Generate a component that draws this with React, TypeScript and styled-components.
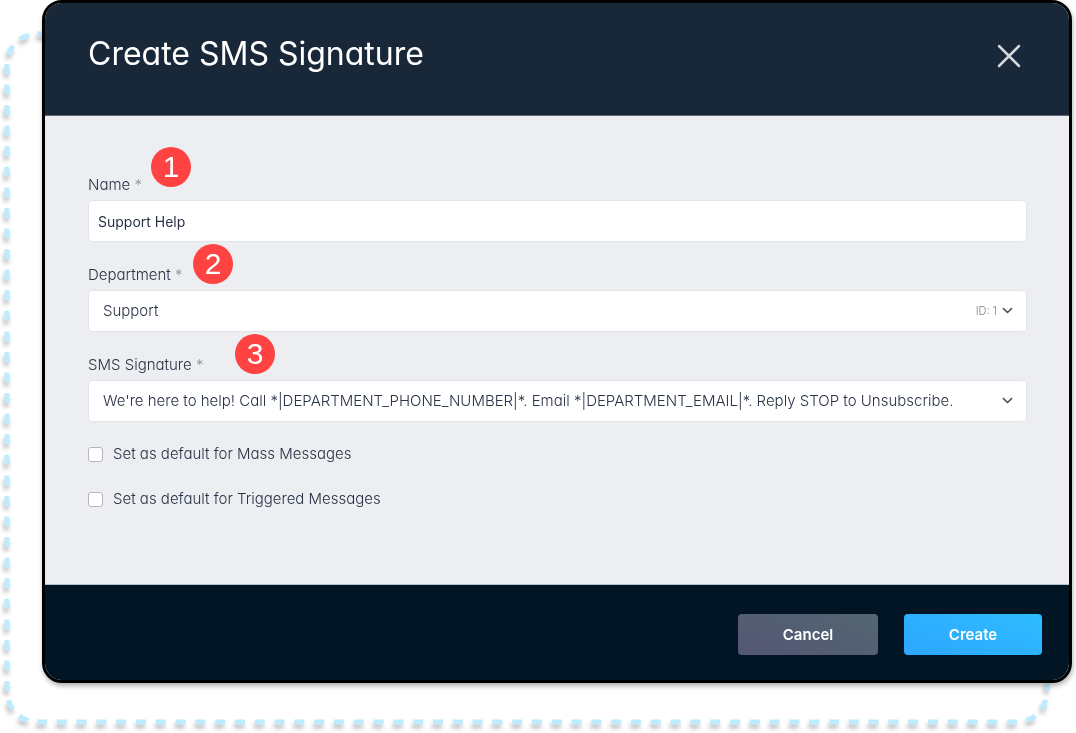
import React from "react";
import styled, { createGlobalStyle } from "styled-components";

const GlobalStyle = createGlobalStyle`
  *, *::before, *::after { box-sizing: border-box; }
  body {
    margin: 0;
    background: #ffffff;
    color: #283345;
    font-family: Inter, "Liberation Sans", sans-serif;
    font-feature-settings: "cv11";
    font-size: 15px;
    line-height: 20px;
  }
  button, input, select { font: inherit; font-feature-settings: inherit; color: inherit; }
`;

const Stage = styled.main`
  position: relative;
  padding: 0 4px 50px 42px;
`;

const Outline = styled.svg`
  position: absolute;
  top: 64px;
  left: 37px;
  width: calc(100% - 96px);
  height: calc(100% - 106px);
  overflow: visible;
  filter: drop-shadow(-1px 4px 2px rgba(0, 0, 0, 0.25));
`;

const Dialog = styled.form`
  position: relative;
  overflow: hidden;
  border: 3px solid #000000;
  border-radius: 20px;
  background: #edeef2;
  box-shadow: 1px 3px 5px rgba(0, 0, 0, 0.3);
`;

const Header = styled.header`
  display: flex;
  align-items: flex-start;
  justify-content: space-between;
  padding: 31px 44px 41px 43px;
  border-bottom: 1px solid #5b6977;
  background: #182838;
`;

const Title = styled.h1`
  margin: 0;
  color: #ffffff;
  font-size: 32px;
  font-weight: 400;
  line-height: 40px;
`;

const CloseButton = styled.button`
  display: flex;
  margin-top: 6px;
  padding: 0;
  border: 0;
  background: none;
  color: #d3d6da;
  cursor: pointer;
`;

const Fields = styled.div`
  padding: 58px 42px 50px 43px;
  border-bottom: 1px solid #b3c0c6;
`;

const Field = styled.div`
  margin-bottom: 22px;
`;

const LabelRow = styled.div`
  position: relative;
  display: flex;
  margin-bottom: 5px;
  line-height: 21px;
`;

const Label = styled.label`
  font-weight: 300;
`;

const Required = styled.span`
  color: #8b929c;
`;

const Step = styled.span<{ $left: number; $raised?: boolean }>`
  position: absolute;
  left: ${(p) => p.$left}px;
  bottom: ${(p) => (p.$raised ? 8 : 1)}px;
  width: 40px;
  height: 40px;
  border-radius: 50%;
  background: #ff4343;
  color: #ffffff;
  font-family: "Liberation Sans", Arial, sans-serif;
  font-size: 30px;
  line-height: 40px;
  text-align: center;
`;

const TextInput = styled.input`
  display: block;
  width: 100%;
  height: 42px;
  padding: 0 9px;
  border: 1px solid #e2e5ea;
  border-radius: 4px;
  background: #ffffff;
  font-size: 14px;
`;

const SelectBox = styled.div`
  position: relative;
`;

const Select = styled.select`
  display: block;
  width: 100%;
  height: 42px;
  padding: 0 44px 0 14px;
  border: 1px solid #e2e5ea;
  border-radius: 4px;
  background: #ffffff;
  font-weight: 300;
  appearance: none;
`;

const SelectInfo = styled.span`
  position: absolute;
  top: 0;
  right: 14px;
  display: flex;
  align-items: center;
  gap: 5px;
  height: 42px;
  color: #7d838d;
  font-size: 11px;
  font-weight: 300;
  pointer-events: none;
`;

const CheckRow = styled.label`
  display: flex;
  align-items: center;
  gap: 10px;
  margin-bottom: 25px;
  font-weight: 300;
`;

const Checkbox = styled.input`
  width: 15px;
  height: 15px;
  margin: 0;
  border: 1px solid #b4b6ba;
  border-radius: 3px;
  background: #ffffff;
  appearance: none;

  &:checked { background: #2fabff; }
`;

const Footer = styled.footer`
  display: flex;
  justify-content: flex-end;
  gap: 26px;
  padding: 29px 27px 25px;
  background: #021525;
`;

const Button = styled.button<{ $primary?: boolean }>`
  min-width: ${(p) => (p.$primary ? 138 : 140)}px;
  height: 41px;
  border: 0;
  border-radius: 4px;
  background: ${(p) =>
    p.$primary
      ? "linear-gradient(20deg, #2da6ff, #2ebcff)"
      : "linear-gradient(20deg, #545673, #536672)"};
  color: #ffffff;
  font-feature-settings: normal;
  font-weight: 600;
  cursor: pointer;
`;

const cornerDashes = "0 9.5 10 9.5 10 9.5";

const DashedOutline = () => (
  <Outline fill="none" stroke="#bdebff" strokeWidth="5" aria-hidden="true">
    <line x1="-30" y1="0" x2="-30" y2="100%" strokeDasharray="10 10.57" />
    <path d="M-30 0A30 30 0 0 1 0 -30" strokeDasharray={cornerDashes} />
    <line x1="0" y1="-30" x2="100%" y2="-30" strokeDasharray="10 9.8" />
    <svg y="100%" overflow="visible">
      <path d="M-30 0A30 31 0 0 0 0 31" strokeDasharray={cornerDashes} />
      <line x1="0" y1="31" x2="100%" y2="31" strokeDasharray="10 9.8" />
    </svg>
    <svg x="100%" y="100%" overflow="visible">
      <path d="M0 31A30 31 0 0 0 30 0V-10" strokeDasharray="0 9.5 10 9.5 10 9.5 10 0" />
    </svg>
  </Outline>
);

const Chevron = () => (
  <svg width="11" height="8" viewBox="0 0 11 8" fill="none" stroke="#4d5764" strokeWidth="1.7" strokeLinecap="round" strokeLinejoin="round" aria-hidden="true">
    <path d="M1.5 1.7 5.5 5.5 9.5 1.7" />
  </svg>
);

type FieldLabelProps = { id: string; text: string; step: number; left: number; raised?: boolean };

const FieldLabel = ({ id, text, step, left, raised }: FieldLabelProps) => (
  <LabelRow>
    <Label htmlFor={id}>
      {text} <Required>*</Required>
    </Label>
    <Step $left={left} $raised={raised}>{step}</Step>
  </LabelRow>
);

export default function App() {
  return (
    <>
      <GlobalStyle />
      <Stage>
        <DashedOutline />
        <Dialog onSubmit={(e) => e.preventDefault()}>
          <Header>
            <Title>Create SMS Signature</Title>
            <CloseButton type="button" aria-label="Close">
              <svg width="32" height="32" viewBox="0 0 32 32" fill="none" stroke="currentColor" strokeWidth="2.5" strokeLinecap="round">
                <path d="M6 6 26 26M26 6 6 26" />
              </svg>
            </CloseButton>
          </Header>
          <Fields>
            <Field>
              <FieldLabel id="name" text="Name" step={1} left={63} raised />
              <TextInput id="name" type="text" defaultValue="Support Help" />
            </Field>
            <Field>
              <FieldLabel id="department" text="Department" step={2} left={105} />
              <SelectBox>
                <Select id="department">
                  <option>Support</option>
                </Select>
                <SelectInfo>
                  ID: 1
                  <Chevron />
                </SelectInfo>
              </SelectBox>
            </Field>
            <Field>
              <FieldLabel id="signature" text="SMS Signature" step={3} left={147} />
              <SelectBox>
                <Select id="signature">
                  <option>
                    We're here to help! Call *|DEPARTMENT_PHONE_NUMBER|*. Email *|DEPARTMENT_EMAIL|*. Reply STOP to Unsubscribe.
                  </option>
                </Select>
                <SelectInfo>
                  <Chevron />
                </SelectInfo>
              </SelectBox>
            </Field>
            <CheckRow>
              <Checkbox type="checkbox" />
              Set as default for Mass Messages
            </CheckRow>
            <CheckRow>
              <Checkbox type="checkbox" />
              Set as default for Triggered Messages
            </CheckRow>
          </Fields>
          <Footer>
            <Button type="button">Cancel</Button>
            <Button type="submit" $primary>
              Create
            </Button>
          </Footer>
        </Dialog>
      </Stage>
    </>
  );
}
